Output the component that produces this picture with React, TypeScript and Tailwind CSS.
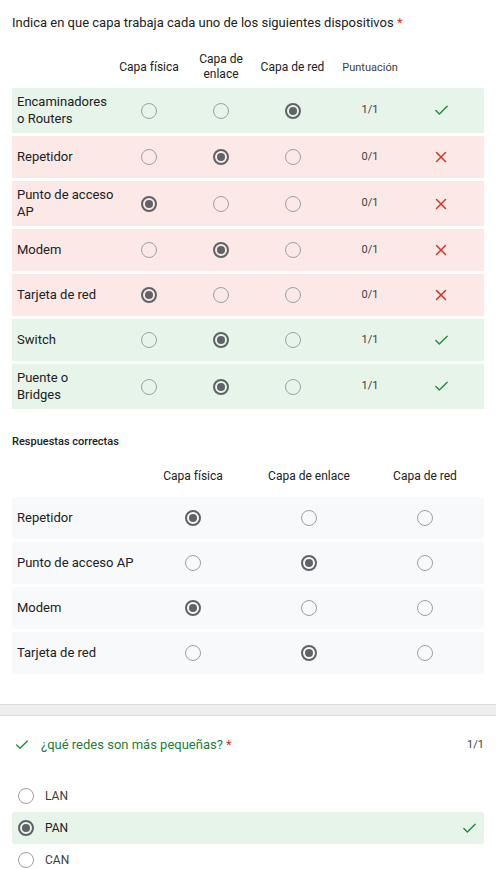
import { Check, X } from "lucide-react";

type Row = { label: string; sel: number; ok: boolean };

const rows: Row[] = [
  { label: "Encaminadores\no Routers", sel: 2, ok: true },
  { label: "Repetidor", sel: 1, ok: false },
  { label: "Punto de acceso\nAP", sel: 0, ok: false },
  { label: "Modem", sel: 1, ok: false },
  { label: "Tarjeta de red", sel: 0, ok: false },
  { label: "Switch", sel: 1, ok: true },
  { label: "Puente o\nBridges", sel: 1, ok: true },
];

const correct = [
  { label: "Repetidor", sel: 0 },
  { label: "Punto de acceso AP", sel: 1 },
  { label: "Modem", sel: 0 },
  { label: "Tarjeta de red", sel: 1 },
];

const Radio = ({ on }: { on: boolean }) =>
  on ? (
    <span className="flex h-4 w-4 items-center justify-center rounded-full border-2 border-[#5f6368]">
      <span className="h-2 w-2 rounded-full bg-[#5f6368]" />
    </span>
  ) : (
    <span className="block h-4 w-4 rounded-full border border-[#9aa0a6]" />
  );

const cols = "grid grid-cols-[101px_72px_72px_71px_84px_58px]";
const cols2 = "grid grid-cols-[123px_116px_116px_116px]";

export default function App() {
  return (
    <div className="w-[496px] bg-white font-['Roboto',sans-serif] text-[#202124]">
      {/* First question */}
      <div className="px-3 pt-[15px]">
        <div className="text-[13px] leading-4">
          Indica en que capa trabaja cada uno de los siguientes dispositivos{" "}
          <span className="text-[#d93025]">*</span>
        </div>

        {/* Grid header */}
        <div className={`${cols} mt-[15px] items-center h-[42px] text-[12px] leading-[15px] text-[#202124]`}>
          <span />
          <span className="text-center">Capa física</span>
          <span className="text-center">Capa de<br />enlace</span>
          <span className="text-center">Capa de red</span>
          <span className="text-center text-[11px] text-[#3c4043]">Puntuación</span>
          <span />
        </div>

        <div className="flex flex-col gap-[3px]">
          {rows.map((r) => (
            <div
              key={r.label}
              className={`${cols} min-h-[42px] items-center py-[6px] ${r.ok ? "bg-[#e6f4ea]" : "bg-[#fce8e6]"}`}
            >
              <span className="whitespace-pre pl-[5px] text-[13px] leading-[16.5px]">{r.label}</span>
              {[0, 1, 2].map((i) => (
                <span key={i} className="flex justify-center">
                  <Radio on={r.sel === i} />
                </span>
              ))}
              <span className="text-center text-[11px] text-[#3c4043]">{r.ok ? "1/1" : "0/1"}</span>
              <span className="flex justify-center">
                {r.ok ? (
                  <Check size={17} strokeWidth={2} className="text-[#1e8e3e]" />
                ) : (
                  <X size={18} strokeWidth={2} className="text-[#d93025]" />
                )}
              </span>
            </div>
          ))}
        </div>

        <div className="mt-[25px] text-[11px] font-medium leading-4">Respuestas correctas</div>

        <div className={`${cols2} mt-[5px] h-[42px] items-center text-[12px]`}>
          <span />
          <span className="text-center">Capa física</span>
          <span className="text-center">Capa de enlace</span>
          <span className="text-center">Capa de red</span>
        </div>

        <div className="flex flex-col gap-[3px]">
          {correct.map((r) => (
            <div key={r.label} className={`${cols2} h-[42px] items-center rounded-[3px] bg-[#f8f9fa]`}>
              <span className="pl-[5px] text-[13px] leading-4">{r.label}</span>
              {[0, 1, 2].map((i) => (
                <span key={i} className="flex justify-center">
                  <Radio on={r.sel === i} />
                </span>
              ))}
            </div>
          ))}
        </div>
      </div>

      {/* Separator */}
      <div className="mt-[30px] h-[12px] border-y border-[#dadce0] bg-[#efeeec]" />

      {/* Second question */}
      <div className="px-3 pt-[21px]">
        <div className="flex items-center h-4">
          <Check size={16} strokeWidth={2} className="ml-[2px] text-[#1e8e3e]" />
          <span className="ml-[11px] text-[13px] text-[#188038]">
            ¿qué redes son más pequeñas? <span className="text-[#d93025]">*</span>
          </span>
          <span className="ml-auto text-[11px] text-[#3c4043]">1/1</span>
        </div>

        <div className="mt-[27px] flex flex-col">
          <div className="flex h-[32px] items-center gap-[11px] pl-[6px] text-[12px] text-[#3c4043]">
            <Radio on={false} />
            <span>LAN</span>
          </div>
          <div className="flex h-[32px] items-center gap-[11px] rounded-[3px] bg-[#e6f4ea] pl-[6px] pr-[6px] text-[12px]">
            <Radio on={true} />
            <span>PAN</span>
            <Check size={17} strokeWidth={2} className="ml-auto text-[#1e8e3e]" />
          </div>
          <div className="flex h-[32px] items-center gap-[11px] pl-[6px] text-[12px] text-[#3c4043]">
            <Radio on={false} />
            <span>CAN</span>
          </div>
        </div>
      </div>
    </div>
  );
}
